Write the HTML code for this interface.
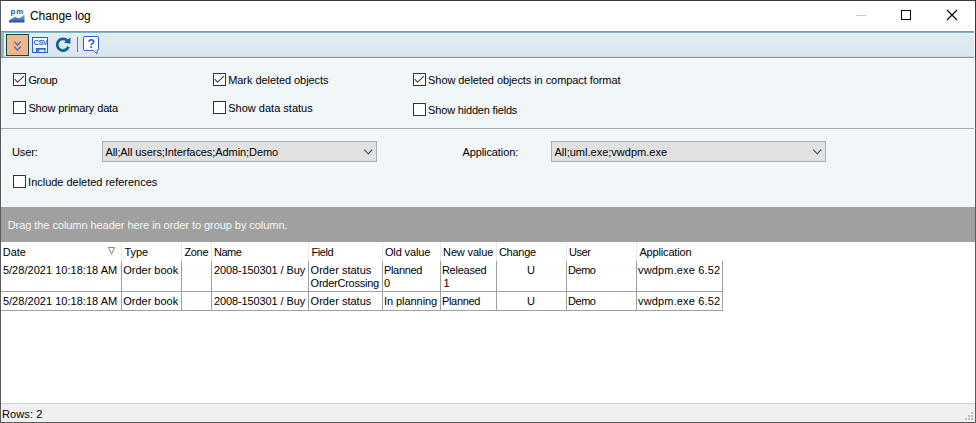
<!DOCTYPE html>
<html><head><meta charset="utf-8"><title>Change log</title>
<style>
html,body{margin:0;padding:0;}
body{width:976px;height:423px;overflow:hidden;background:#fff;font-family:"Liberation Sans",sans-serif;font-size:11px;color:#000;position:relative;}
.a{position:absolute;white-space:nowrap;}
.t{position:absolute;white-space:nowrap;line-height:13px;height:13px;}
.cb{position:absolute;width:11px;height:11px;border:1px solid #333;background:#fff;}
.vl{position:absolute;width:1px;background:#a0a0a0;}
.hl{position:absolute;height:1px;background:#a0a0a0;}
</style></head><body>
<!-- window frame -->
<div class="a" style="left:0;top:0;width:976px;height:1px;background:#3a3a3a"></div>
<div class="a" style="left:0;top:0;width:1px;height:423px;background:#5a5a5a"></div>
<div class="a" style="left:975px;top:0;width:1px;height:423px;background:#5a5a5a"></div>
<div class="a" style="left:975px;top:0;width:1px;height:59px;background:#1f3a44"></div>
<div class="a" style="left:0;top:422px;width:976px;height:1px;background:#5a5a5a"></div>

<!-- title bar -->
<svg class="a" style="left:8px;top:7px" width="18" height="18" viewBox="0 0 18 18">
<defs><linearGradient id="pg" x1="0" y1="0" x2="0" y2="1"><stop offset="0" stop-color="#9fb4d8"/><stop offset="1" stop-color="#1b4a9c"/></linearGradient></defs>
<text x="2.6" y="7.3" font-family="Liberation Sans, sans-serif" font-weight="bold" font-size="8" fill="#2a56a5" letter-spacing="0.7">pm</text>
<path d="M1 15.5 L1 13.5 L7 9.5 L11 11.5 L16.5 7.5 L16.5 15.5 Z" fill="url(#pg)"/>
</svg>
<div class="t" style="left:30px;top:9px;font-size:12px;line-height:15px;height:15px;letter-spacing:-0.07px">Change log</div>
<!-- window buttons -->
<div class="a" style="left:856px;top:15px;width:10px;height:1px;background:#c8c8c8"></div>
<div class="a" style="left:901px;top:10px;width:8px;height:8px;border:1px solid #000"></div>
<svg class="a" style="left:946px;top:9px" width="12" height="12" viewBox="0 0 12 12"><path d="M1 1 L11 11 M11 1 L1 11" stroke="#000" stroke-width="1.1" fill="none"/></svg>

<!-- toolbar -->
<div class="a" style="left:1px;top:31px;width:973px;height:27px;background:linear-gradient(#e3edf2,#d8e6ed);box-sizing:border-box"></div>
<div class="a" style="left:1px;top:31px;width:973px;height:1px;background:#929292"></div>
<div class="a" style="left:1px;top:32px;width:973px;height:1px;background:#7db3c6"></div><div class="a" style="left:1px;top:33px;width:973px;height:1px;background:#e9f1f5"></div>
<div class="a" style="left:1px;top:56px;width:973px;height:1px;background:#c9dae2"></div><div class="a" style="left:1px;top:57px;width:973px;height:1px;background:#909090"></div>
<div class="a" style="left:1px;top:32px;width:3px;height:25px;background:#8fb8c8"></div>
<div class="a" style="left:4px;top:34px;width:1px;height:22px;background:#f4f9fb"></div>
<div class="a" style="left:6px;top:34px;width:23px;height:22px;background:linear-gradient(#f2b88f,#f4b682);border:1px solid #15444f;box-sizing:border-box"></div>
<svg class="a" style="left:12px;top:39px" width="12" height="14" viewBox="12 39 12 14"><path d="M14.2 41.6 L17.5 45 L20.8 41.6 M14.2 46.8 L17.5 50.2 L20.8 46.8" stroke="#2c6be0" stroke-width="1.25" fill="none"/></svg>
<!-- csv icon -->
<svg class="a" style="left:32px;top:37px" width="17" height="17" viewBox="0 0 17 17">
<rect x="0.5" y="0.5" width="15" height="15" fill="#fff" stroke="#2c5dcb"/>
<rect x="1" y="10.5" width="3" height="4.5" fill="#e8e4dc"/>
<rect x="4.5" y="11.5" width="8.5" height="4" fill="#dfe5f3" stroke="#2c5dcb"/><rect x="4" y="11" width="9.5" height="1.6" fill="#2c5dcb"/>
<rect x="5.2" y="12.5" width="2" height="2" fill="#2c5dcb"/>
<text x="1.6" y="7.8" font-family="Liberation Sans, sans-serif" font-weight="bold" font-size="7.4" fill="#2c5dcb" letter-spacing="-0.5">CSV</text>
</svg>
<!-- refresh -->
<svg class="a" style="left:54px;top:36px" width="18" height="18" viewBox="54 36 18 18">
<path d="M67.1 40.5 A5.85 5.85 0 1 0 68.5 46.7" stroke="#10658d" stroke-width="2.8" fill="none"/>
<path d="M70.5 37.2 L70.5 43.8 L63.9 42.7 Z" fill="#10658d"/>
</svg>
<div class="a" style="left:77px;top:37px;width:1px;height:15px;background:#5f808b"></div>
<!-- help -->
<svg class="a" style="left:82px;top:35px" width="19" height="20" viewBox="82 35 19 20">
<path d="M85 36.5 H97 Q98.5 36.5 98.5 38 V49 Q98.5 50.5 97 50.5 L97 53.8 L93.6 50.5 H85 Q83.5 50.5 83.5 49 V38 Q83.5 36.5 85 36.5 Z" fill="#fff" stroke="#2c5dcb" stroke-width="1"/>
<text x="87.4" y="48" font-family="Liberation Sans, sans-serif" font-weight="bold" font-size="12.3" fill="#2c5dcb">?</text>
</svg>

<!-- filter panel -->
<div class="a" style="left:1px;top:58px;width:973px;height:149px;background:#f1f6f9"></div>
<div class="hl" style="left:1px;top:128px;width:973px;background:#a8a8a8"></div>
<div class="cb" style="left:13px;top:73px"></div><svg class="a" style="left:14px;top:74px" width="11" height="11" viewBox="0 0 11 11"><path d="M0.8 5.2 L3.6 8.3 L9.7 2.1" stroke="#333" stroke-width="1.1" fill="none"/></svg>
<div class="cb" style="left:13px;top:101px"></div>
<div class="cb" style="left:213px;top:73px"></div><svg class="a" style="left:214px;top:74px" width="11" height="11" viewBox="0 0 11 11"><path d="M0.8 5.2 L3.6 8.3 L9.7 2.1" stroke="#333" stroke-width="1.1" fill="none"/></svg>
<div class="cb" style="left:213px;top:101px"></div>
<div class="cb" style="left:413px;top:73px"></div><svg class="a" style="left:414px;top:74px" width="11" height="11" viewBox="0 0 11 11"><path d="M0.8 5.2 L3.6 8.3 L9.7 2.1" stroke="#333" stroke-width="1.1" fill="none"/></svg>
<div class="cb" style="left:413px;top:103px"></div>
<div class="cb" style="left:13px;top:175px"></div>
<div class="a" style="left:102px;top:141px;width:275px;height:21px;background:#e1e1e1;border:1px solid #adadad;box-sizing:border-box"></div>
<svg class="a" style="left:363px;top:148px" width="11" height="7" viewBox="0 0 11 7"><path d="M1.2 1.7 L5.2 5.8 L9.2 1.7" stroke="#444" stroke-width="1.1" fill="none"/></svg>
<div class="a" style="left:551px;top:141px;width:275px;height:21px;background:#e1e1e1;border:1px solid #adadad;box-sizing:border-box"></div>
<svg class="a" style="left:812px;top:148px" width="11" height="7" viewBox="0 0 11 7"><path d="M1.2 1.7 L5.2 5.8 L9.2 1.7" stroke="#444" stroke-width="1.1" fill="none"/></svg>

<!-- group panel -->
<div class="a" style="left:1px;top:207px;width:974px;height:35px;background:#a0a0a0"></div>

<!-- grid -->
<svg class="a" style="left:107px;top:247px" width="9" height="9" viewBox="0 0 9 9"><path d="M1.5 0.5 H7.5 L4.5 7.3 Z" fill="#fff" stroke="#858585" stroke-width="1"/></svg>
<div class="hl" style="left:1px;top:291px;width:722px"></div>
<div class="hl" style="left:1px;top:310px;width:722px"></div>
<div class="vl" style="left:121px;top:261px;height:50px"></div><div class="vl" style="left:121px;top:242px;height:19px;background:#e8e8e8"></div>
<div class="vl" style="left:181px;top:261px;height:50px"></div><div class="vl" style="left:181px;top:242px;height:19px;background:#e8e8e8"></div>
<div class="vl" style="left:211px;top:261px;height:50px"></div><div class="vl" style="left:211px;top:242px;height:19px;background:#e8e8e8"></div>
<div class="vl" style="left:308px;top:261px;height:50px"></div><div class="vl" style="left:308px;top:242px;height:19px;background:#e8e8e8"></div>
<div class="vl" style="left:382px;top:261px;height:50px"></div><div class="vl" style="left:382px;top:242px;height:19px;background:#e8e8e8"></div>
<div class="vl" style="left:440px;top:261px;height:50px"></div><div class="vl" style="left:440px;top:242px;height:19px;background:#e8e8e8"></div>
<div class="vl" style="left:496px;top:261px;height:50px"></div><div class="vl" style="left:496px;top:242px;height:19px;background:#e8e8e8"></div>
<div class="vl" style="left:566px;top:261px;height:50px"></div><div class="vl" style="left:566px;top:242px;height:19px;background:#e8e8e8"></div>
<div class="vl" style="left:636px;top:261px;height:50px"></div><div class="vl" style="left:636px;top:242px;height:19px;background:#e8e8e8"></div>
<div class="vl" style="left:722px;top:261px;height:50px"></div>
<div class="t" style="left:28.4px;top:74px;letter-spacing:-0.36px">Group</div>
<div class="t" style="left:28.4px;top:102px;letter-spacing:-0.12px">Show primary data</div>
<div class="t" style="left:228.2px;top:74px;letter-spacing:-0.06px">Mark deleted objects</div>
<div class="t" style="left:228.2px;top:102px;letter-spacing:0.01px">Show data status</div>
<div class="t" style="left:428.1px;top:74px;letter-spacing:-0.07px">Show deleted objects in compact format</div>
<div class="t" style="left:428.1px;top:104px;letter-spacing:-0.18px">Show hidden fields</div>
<div class="t" style="left:11.9px;top:146px;letter-spacing:-0.10px">User:</div>
<div class="t" style="left:105.4px;top:146px;letter-spacing:-0.08px">All;All users;Interfaces;Admin;Demo</div>
<div class="t" style="left:462.4px;top:146px;letter-spacing:-0.09px">Application:</div>
<div class="t" style="left:554.4px;top:146px;letter-spacing:0.01px">All;uml.exe;vwdpm.exe</div>
<div class="t" style="left:28.1px;top:176px;letter-spacing:-0.02px">Include deleted references</div>
<div class="t" style="left:7.7px;top:219px;letter-spacing:-0.06px;color:#f6f6f6">Drag the column header here in order to group by column.</div>
<div class="t" style="left:2.7px;top:246px">Date</div>
<div class="t" style="left:124.4px;top:246px">Type</div>
<div class="t" style="left:184.4px;top:246px;letter-spacing:-0.32px">Zone</div>
<div class="t" style="left:213.9px;top:246px;letter-spacing:-0.45px">Name</div>
<div class="t" style="left:311.4px;top:246px;letter-spacing:-0.41px">Field</div>
<div class="t" style="left:384.9px;top:246px;letter-spacing:-0.13px">Old value</div>
<div class="t" style="left:443.1px;top:246px;letter-spacing:-0.15px">New value</div>
<div class="t" style="left:498.9px;top:246px;letter-spacing:-0.25px">Change</div>
<div class="t" style="left:568.9px;top:246px;letter-spacing:-0.36px">User</div>
<div class="t" style="left:639.4px;top:246px;letter-spacing:-0.16px">Application</div>
<div class="t" style="left:2.9px;top:264px;letter-spacing:0.03px">5/28/2021 10:18:18 AM</div>
<div class="t" style="left:123.2px;top:264px">Order book</div>
<div class="t" style="left:213.9px;top:264px;letter-spacing:-0.10px">2008-150301 / Buy</div>
<div class="t" style="left:310.6px;top:264px;letter-spacing:0.02px">Order status</div>
<div class="t" style="left:310.6px;top:277px;letter-spacing:-0.25px">OrderCrossing</div>
<div class="t" style="left:383.9px;top:264px;letter-spacing:-0.30px">Planned</div>
<div class="t" style="left:383.9px;top:277px">0</div>
<div class="t" style="left:441.9px;top:264px;letter-spacing:-0.24px">Released</div>
<div class="t" style="left:443.6px;top:277px">1</div>
<div class="t" style="left:526.9px;top:264px">U</div>
<div class="t" style="left:568.1px;top:264px;letter-spacing:-0.50px">Demo</div>
<div class="t" style="left:638.1px;top:264px;letter-spacing:0.14px">vwdpm.exe 6.52</div>
<div class="t" style="left:2.9px;top:295px;letter-spacing:0.03px">5/28/2021 10:18:18 AM</div>
<div class="t" style="left:123.2px;top:295px">Order book</div>
<div class="t" style="left:213.9px;top:295px;letter-spacing:-0.10px">2008-150301 / Buy</div>
<div class="t" style="left:310.6px;top:295px;letter-spacing:0.02px">Order status</div>
<div class="t" style="left:383.9px;top:295px;letter-spacing:-0.05px">In planning</div>
<div class="t" style="left:441.9px;top:295px;letter-spacing:-0.30px">Planned</div>
<div class="t" style="left:526.9px;top:295px">U</div>
<div class="t" style="left:568.1px;top:295px;letter-spacing:-0.50px">Demo</div>
<div class="t" style="left:638.1px;top:295px;letter-spacing:0.14px">vwdpm.exe 6.52</div>
<!-- status bar -->
<div class="a" style="left:1px;top:403px;width:974px;height:19px;background:#f0f0f0;border-top:1px solid #cfcfcf;box-sizing:border-box"></div>
<div class="t" style="left:1.9px;top:408px;letter-spacing:0.12px">Rows: 2</div>
<div class="a" style="left:971px;top:412px;width:2px;height:2px;background:#bdbdbd"></div><div class="a" style="left:968px;top:415px;width:2px;height:2px;background:#bdbdbd"></div><div class="a" style="left:971px;top:415px;width:2px;height:2px;background:#bdbdbd"></div><div class="a" style="left:965px;top:418px;width:2px;height:2px;background:#bdbdbd"></div><div class="a" style="left:968px;top:418px;width:2px;height:2px;background:#bdbdbd"></div><div class="a" style="left:971px;top:418px;width:2px;height:2px;background:#bdbdbd"></div>
</body></html>
